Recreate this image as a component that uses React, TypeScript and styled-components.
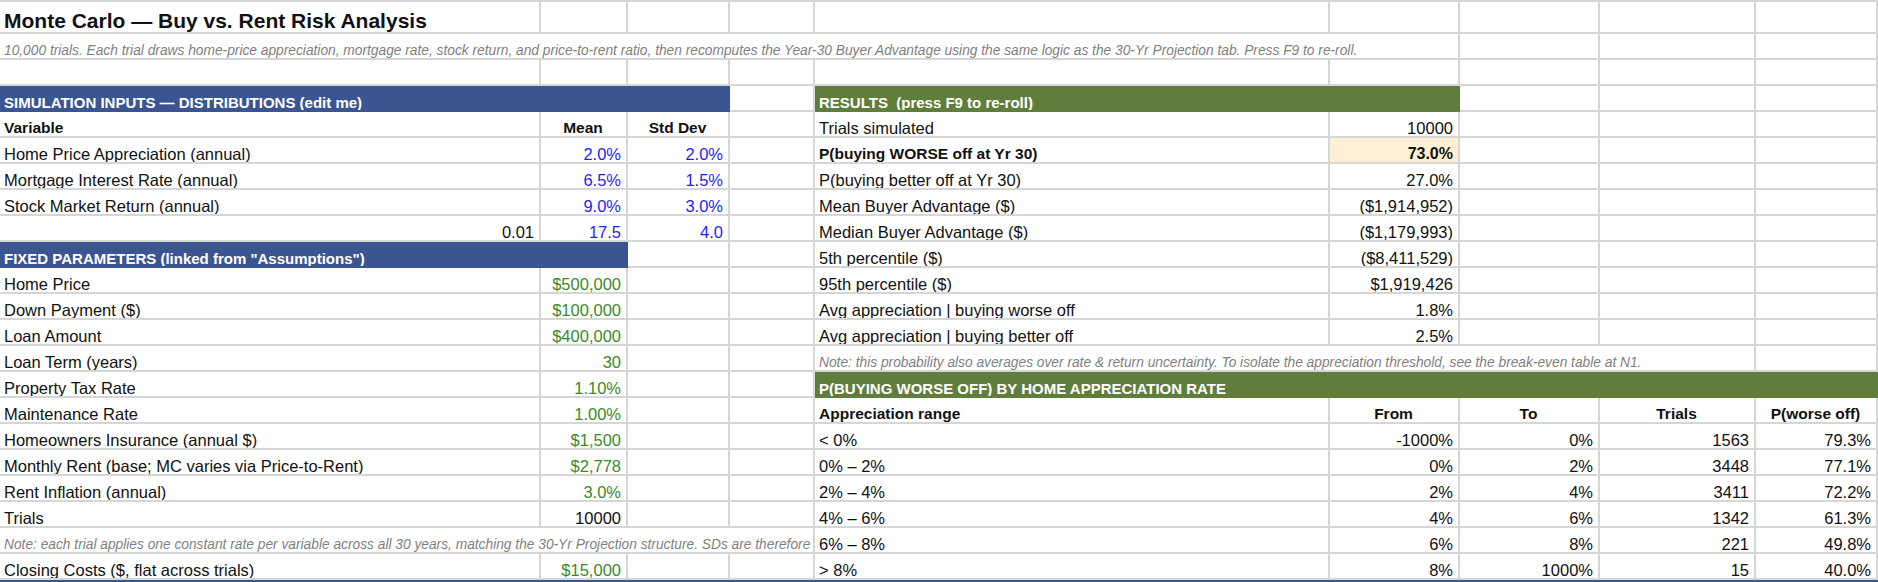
import React from "react";
import styled, { createGlobalStyle } from "styled-components";

const GRID = "#d6d6d6";
const BLUE_BAR = "#3b5591";
const GREEN_BAR = "#5f7e3b";

const GlobalStyle = createGlobalStyle`
  html, body {
    margin: 0;
    padding: 0;
    background: #ffffff;
  }
  body {
    overflow: hidden;
    font-family: "Liberation Sans", Arial, sans-serif;
  }
`;

const Sheet = styled.div`
  display: grid;
  grid-template-columns: 541px 87px 102px 85px 515px 130px 140px 156px 122px;
  grid-template-rows: 32px repeat(22, 26px);
  width: 1878px;
  border-top: 2px solid ${GRID};
`;

const Cell = styled.div<{ $span?: number }>`
  grid-column: span ${(p) => p.$span ?? 1};
  display: flex;
  align-items: flex-end;
  justify-content: flex-start;
  min-width: 0;
  padding: 0 5px 0 4px;
  border-right: 2px solid ${GRID};
  border-bottom: 2px solid ${GRID};
  overflow: hidden;
  white-space: nowrap;
  font-size: 16.5px;
  line-height: 16px;
  color: #111;
`;

const TitleCell = styled(Cell)`
  font-size: 21px;
  line-height: 21px;
  font-weight: bold;
  padding-bottom: 1px;
`;

const StrongLabel = styled(Cell)`
  font-weight: bold;
  font-size: 15.5px;
`;

const ColHead = styled(Cell)`
  justify-content: center;
  font-weight: bold;
  font-size: 15.5px;
`;

const toneColor = {
  plain: "#111111",
  input: "#1f1ff5",
  linked: "#3b8a2a",
};

const Value = styled(Cell)<{ $tone?: keyof typeof toneColor }>`
  justify-content: flex-end;
  color: ${(p) => toneColor[p.$tone ?? "plain"]};
`;

const Highlight = styled(Value)`
  background: #fcf1d4;
  font-weight: bold;
  font-size: 16px;
`;

const Note = styled(Cell)`
  font-style: italic;
  font-size: 13.75px;
  line-height: 14px;
  color: #7f7f7f;
  padding-bottom: 0;
`;

const SectionBar = styled(Cell)<{ $tone: "blue" | "green" }>`
  background: ${(p) => (p.$tone === "blue" ? BLUE_BAR : GREEN_BAR)};
  border-color: ${(p) => (p.$tone === "blue" ? BLUE_BAR : GREEN_BAR)};
  color: #ffffff;
  font-weight: bold;
  font-size: 15px;
  line-height: 15px;
  white-space: pre;
`;

type Kind =
  | "empty"
  | "title"
  | "label"
  | "strong"
  | "head"
  | "num"
  | "input"
  | "linked"
  | "hl"
  | "note"
  | "blueBar"
  | "greenBar";

type Spec = [Kind, string?, number?];

const E: Spec = ["empty"];

const rows: Spec[][] = [
  [["title", "Monte Carlo — Buy vs. Rent Risk Analysis"], E, E, E, E, E, E, E, E],
  [
    [
      "note",
      "10,000 trials. Each trial draws home-price appreciation, mortgage rate, stock return, and price-to-rent ratio, then recomputes the Year-30 Buyer Advantage using the same logic as the 30-Yr Projection tab. Press F9 to re-roll.",
      6,
    ],
    E,
    E,
    E,
  ],
  [E, E, E, E, E, E, E, E, E],
  [
    ["blueBar", "SIMULATION INPUTS — DISTRIBUTIONS (edit me)", 3],
    E,
    ["greenBar", "RESULTS  (press F9 to re-roll)", 2],
    E,
    E,
    E,
  ],
  [
    ["strong", "Variable"],
    ["head", "Mean"],
    ["head", "Std Dev"],
    E,
    ["label", "Trials simulated"],
    ["num", "10000"],
    E,
    E,
    E,
  ],
  [
    ["label", "Home Price Appreciation (annual)"],
    ["input", "2.0%"],
    ["input", "2.0%"],
    E,
    ["strong", "P(buying WORSE off at Yr 30)"],
    ["hl", "73.0%"],
    E,
    E,
    E,
  ],
  [
    ["label", "Mortgage Interest Rate (annual)"],
    ["input", "6.5%"],
    ["input", "1.5%"],
    E,
    ["label", "P(buying better off at Yr 30)"],
    ["num", "27.0%"],
    E,
    E,
    E,
  ],
  [
    ["label", "Stock Market Return (annual)"],
    ["input", "9.0%"],
    ["input", "3.0%"],
    E,
    ["label", "Mean Buyer Advantage ($)"],
    ["num", "($1,914,952)"],
    E,
    E,
    E,
  ],
  [
    ["num", "0.01"],
    ["input", "17.5"],
    ["input", "4.0"],
    E,
    ["label", "Median Buyer Advantage ($)"],
    ["num", "($1,179,993)"],
    E,
    E,
    E,
  ],
  [
    ["blueBar", 'FIXED PARAMETERS (linked from "Assumptions")', 2],
    E,
    E,
    ["label", "5th percentile ($)"],
    ["num", "($8,411,529)"],
    E,
    E,
    E,
  ],
  [
    ["label", "Home Price"],
    ["linked", "$500,000"],
    E,
    E,
    ["label", "95th percentile ($)"],
    ["num", "$1,919,426"],
    E,
    E,
    E,
  ],
  [
    ["label", "Down Payment ($)"],
    ["linked", "$100,000"],
    E,
    E,
    ["label", "Avg appreciation  |  buying worse off"],
    ["num", "1.8%"],
    E,
    E,
    E,
  ],
  [
    ["label", "Loan Amount"],
    ["linked", "$400,000"],
    E,
    E,
    ["label", "Avg appreciation  |  buying better off"],
    ["num", "2.5%"],
    E,
    E,
    E,
  ],
  [
    ["label", "Loan Term (years)"],
    ["linked", "30"],
    E,
    E,
    [
      "note",
      "Note: this probability also averages over rate & return uncertainty. To isolate the appreciation threshold, see the break-even table at N1.",
      4,
    ],
    E,
  ],
  [
    ["label", "Property Tax Rate"],
    ["linked", "1.10%"],
    E,
    E,
    ["greenBar", "P(BUYING WORSE OFF) BY HOME APPRECIATION RATE", 5],
  ],
  [
    ["label", "Maintenance Rate"],
    ["linked", "1.00%"],
    E,
    E,
    ["strong", "Appreciation range"],
    ["head", "From"],
    ["head", "To"],
    ["head", "Trials"],
    ["head", "P(worse off)"],
  ],
  [
    ["label", "Homeowners Insurance (annual $)"],
    ["linked", "$1,500"],
    E,
    E,
    ["label", "< 0%"],
    ["num", "-1000%"],
    ["num", "0%"],
    ["num", "1563"],
    ["num", "79.3%"],
  ],
  [
    ["label", "Monthly Rent (base; MC varies via Price-to-Rent)"],
    ["linked", "$2,778"],
    E,
    E,
    ["label", "0% – 2%"],
    ["num", "0%"],
    ["num", "2%"],
    ["num", "3448"],
    ["num", "77.1%"],
  ],
  [
    ["label", "Rent Inflation (annual)"],
    ["linked", "3.0%"],
    E,
    E,
    ["label", "2% – 4%"],
    ["num", "2%"],
    ["num", "4%"],
    ["num", "3411"],
    ["num", "72.2%"],
  ],
  [
    ["label", "Trials"],
    ["num", "10000"],
    E,
    E,
    ["label", "4% – 6%"],
    ["num", "4%"],
    ["num", "6%"],
    ["num", "1342"],
    ["num", "61.3%"],
  ],
  [
    [
      "note",
      "Note: each trial applies one constant rate per variable across all 30 years, matching the 30-Yr Projection structure. SDs are therefore (",
      4,
    ],
    ["label", "6% – 8%"],
    ["num", "6%"],
    ["num", "8%"],
    ["num", "221"],
    ["num", "49.8%"],
  ],
  [
    ["label", "Closing Costs ($, flat across trials)"],
    ["linked", "$15,000"],
    E,
    E,
    ["label", "> 8%"],
    ["num", "8%"],
    ["num", "1000%"],
    ["num", "15"],
    ["num", "40.0%"],
  ],
  [["blueBar", "", 9]],
];

const renderCell = ([kind, text, span]: Spec, key: string) => {
  switch (kind) {
    case "title":
      return <TitleCell key={key} $span={span}>{text}</TitleCell>;
    case "label":
      return <Cell key={key} $span={span}>{text}</Cell>;
    case "strong":
      return <StrongLabel key={key} $span={span}>{text}</StrongLabel>;
    case "head":
      return <ColHead key={key} $span={span}>{text}</ColHead>;
    case "num":
      return <Value key={key} $span={span}>{text}</Value>;
    case "input":
      return <Value key={key} $span={span} $tone="input">{text}</Value>;
    case "linked":
      return <Value key={key} $span={span} $tone="linked">{text}</Value>;
    case "hl":
      return <Highlight key={key} $span={span}>{text}</Highlight>;
    case "note":
      return <Note key={key} $span={span}>{text}</Note>;
    case "blueBar":
      return <SectionBar key={key} $span={span} $tone="blue">{text}</SectionBar>;
    case "greenBar":
      return <SectionBar key={key} $span={span} $tone="green">{text}</SectionBar>;
    default:
      return <Cell key={key} $span={span} />;
  }
};

export default function App() {
  return (
    <>
      <GlobalStyle />
      <Sheet>
        {rows.map((row, r) => row.map((spec, c) => renderCell(spec, `${r}-${c}`)))}
      </Sheet>
    </>
  );
}
